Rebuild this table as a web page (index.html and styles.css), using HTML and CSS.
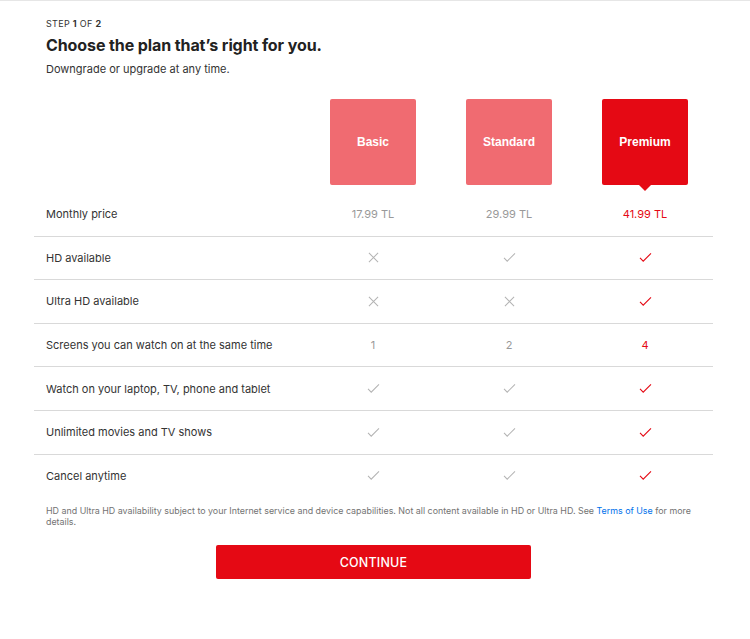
FILE: index.html
```html
<!DOCTYPE html>
<html>
<head>
<meta charset="utf-8">
<link rel="stylesheet" href="styles.css">
</head>
<body>
<div class="page">
  <div class="header">
    <div class="step">STEP <b>1</b> OF <b>2</b></div>
    <h1 class="title">Choose the plan that’s right for you.</h1>
    <div class="sub">Downgrade or upgrade at any time.</div>
  </div>
  <div class="table">
    <div class="plans">
      <div></div>
      <div class="cell"><div class="plan">Basic</div></div>
      <div class="cell"><div class="plan">Standard</div></div>
      <div class="cell"><div class="plan selected">Premium</div></div>
    </div>
    <div class="row">
      <div class="label">Monthly price</div>
      <div class="cell val">17.99 TL</div>
      <div class="cell val">29.99 TL</div>
      <div class="cell val red">41.99 TL</div>
    </div>
    <div class="row">
      <div class="label">HD available</div>
      <div class="cell"><svg class="ic" viewBox="0 0 12 12"><path d="M1 1L11 11M11 1L1 11" stroke="#b3b3b3" stroke-width="1.1" fill="none"/></svg></div>
      <div class="cell"><svg class="ic" viewBox="0 0 14 12"><path d="M1 6.5L4.5 10L13 1.5" stroke="#b3b3b3" stroke-width="1.1" fill="none"/></svg></div>
      <div class="cell"><svg class="ic" viewBox="0 0 14 12"><path d="M1 6.5L4.5 10L13 1.5" stroke="#e50914" stroke-width="1.2" fill="none"/></svg></div>
    </div>
    <div class="row">
      <div class="label">Ultra HD available</div>
      <div class="cell"><svg class="ic" viewBox="0 0 12 12"><path d="M1 1L11 11M11 1L1 11" stroke="#b3b3b3" stroke-width="1.1" fill="none"/></svg></div>
      <div class="cell"><svg class="ic" viewBox="0 0 12 12"><path d="M1 1L11 11M11 1L1 11" stroke="#b3b3b3" stroke-width="1.1" fill="none"/></svg></div>
      <div class="cell"><svg class="ic" viewBox="0 0 14 12"><path d="M1 6.5L4.5 10L13 1.5" stroke="#e50914" stroke-width="1.2" fill="none"/></svg></div>
    </div>
    <div class="row">
      <div class="label">Screens you can watch on at the same time</div>
      <div class="cell val">1</div>
      <div class="cell val">2</div>
      <div class="cell val red">4</div>
    </div>
    <div class="row">
      <div class="label">Watch on your laptop, TV, phone and tablet</div>
      <div class="cell"><svg class="ic" viewBox="0 0 14 12"><path d="M1 6.5L4.5 10L13 1.5" stroke="#b3b3b3" stroke-width="1.1" fill="none"/></svg></div>
      <div class="cell"><svg class="ic" viewBox="0 0 14 12"><path d="M1 6.5L4.5 10L13 1.5" stroke="#b3b3b3" stroke-width="1.1" fill="none"/></svg></div>
      <div class="cell"><svg class="ic" viewBox="0 0 14 12"><path d="M1 6.5L4.5 10L13 1.5" stroke="#e50914" stroke-width="1.2" fill="none"/></svg></div>
    </div>
    <div class="row">
      <div class="label">Unlimited movies and TV shows</div>
      <div class="cell"><svg class="ic" viewBox="0 0 14 12"><path d="M1 6.5L4.5 10L13 1.5" stroke="#b3b3b3" stroke-width="1.1" fill="none"/></svg></div>
      <div class="cell"><svg class="ic" viewBox="0 0 14 12"><path d="M1 6.5L4.5 10L13 1.5" stroke="#b3b3b3" stroke-width="1.1" fill="none"/></svg></div>
      <div class="cell"><svg class="ic" viewBox="0 0 14 12"><path d="M1 6.5L4.5 10L13 1.5" stroke="#e50914" stroke-width="1.2" fill="none"/></svg></div>
    </div>
    <div class="row last">
      <div class="label">Cancel anytime</div>
      <div class="cell"><svg class="ic" viewBox="0 0 14 12"><path d="M1 6.5L4.5 10L13 1.5" stroke="#b3b3b3" stroke-width="1.1" fill="none"/></svg></div>
      <div class="cell"><svg class="ic" viewBox="0 0 14 12"><path d="M1 6.5L4.5 10L13 1.5" stroke="#b3b3b3" stroke-width="1.1" fill="none"/></svg></div>
      <div class="cell"><svg class="ic" viewBox="0 0 14 12"><path d="M1 6.5L4.5 10L13 1.5" stroke="#e50914" stroke-width="1.2" fill="none"/></svg></div>
    </div>
  </div>
  <p class="note">HD and Ultra HD availability subject to your Internet service and device capabilities. Not all content available in HD or Ultra HD. See <a href="#">Terms of Use</a> for more details.</p>
  <div class="actions"><button class="btn">CONTINUE</button></div>
</div>
</body>
</html>
```

FILE: styles.css
```css
html, body {
  margin: 0;
  padding: 0;
  background: #fff;
}
body {
  border-top: 1px solid #e6e6e6;
  font-family: Inter, "Noto Sans", sans-serif;
  color: #333;
}
.page {
  width: 679px;
  margin-left: 34px;
}
.header {
  padding: 17px 12px 0;
}
.step {
  font-size: 9px;
  line-height: 12px;
  letter-spacing: 0.3px;
  color: #333;
}
.step b { font-weight: 700; }
.title {
  margin: 5px 0 0;
  font-size: 16px;
  line-height: 20px;
  font-weight: 700;
  color: #222;
  letter-spacing: -0.1px;
}
.sub {
  margin-top: 6px;
  font-size: 11px;
  line-height: 16px;
  color: #333;
}
.table {
  margin-top: 22px;
}
.plans, .row {
  display: grid;
  grid-template-columns: 271px repeat(3, 136px);
}
.plans {
  height: 94px;
}
.cell {
  display: flex;
  justify-content: center;
  align-items: center;
}
.plans .cell { align-items: flex-start; }
.plan {
  position: relative;
  width: 86px;
  height: 86px;
  background: #f06b71;
  border-radius: 2px;
  color: #fff;
  font-family: "Liberation Sans", Arial, sans-serif;
  font-weight: 700;
  font-size: 12px;
  display: flex;
  align-items: center;
  justify-content: center;
}
.plan.selected { background: #e50914; }
.plan.selected::after {
  content: "";
  position: absolute;
  left: 50%;
  bottom: -6px;
  margin-left: -6px;
  border-left: 6px solid transparent;
  border-right: 6px solid transparent;
  border-top: 6px solid #e50914;
}
.row {
  height: 42.6px;
  border-bottom: 1px solid #d9d9d9;
}
.row.last { border-bottom: none; }
.label {
  padding-left: 12px;
  display: flex;
  align-items: center;
  font-size: 11px;
  color: #333;
}
.val {
  font-size: 11px;
  color: #999;
}
.val.red { color: #e50914; }
.ic {
  width: 13px;
  height: 11px;
}
.note {
  margin: 8px 12px 0;
  font-size: 8.9px;
  line-height: 11px;
  color: #737373;
}
.note a { color: #0071eb; text-decoration: none; }
.actions {
  display: flex;
  justify-content: center;
  margin-top: 18px;
}
.btn {
  width: 315px;
  height: 34px;
  background: #e50914;
  color: #fff;
  border: none;
  border-radius: 2px;
  font-family: Inter, "Noto Sans", sans-serif;
  font-size: 12.5px;
  font-weight: 500;
  letter-spacing: 0.2px;
}
```
